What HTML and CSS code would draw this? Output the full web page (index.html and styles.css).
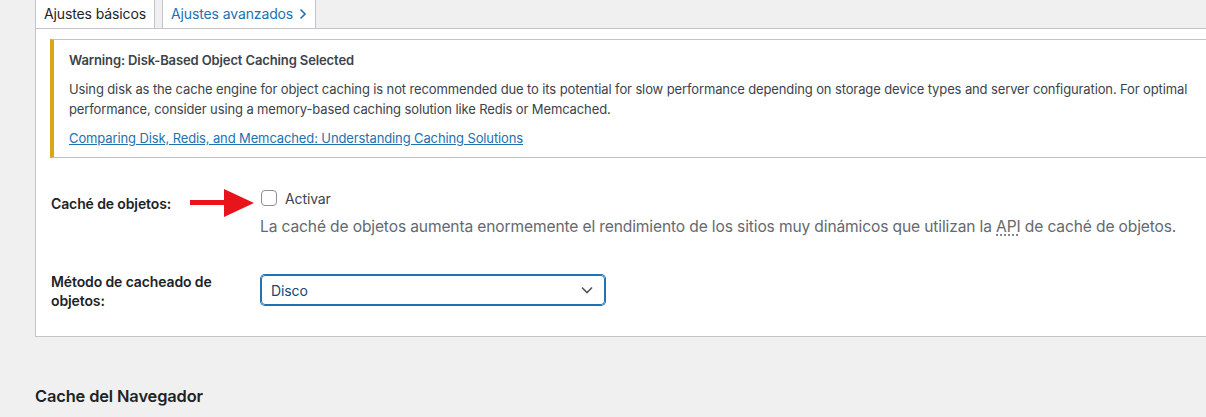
FILE: index.html
```html
<!DOCTYPE html>
<html lang="es">
<head>
<meta charset="utf-8">
<title>Ajustes</title>
<link rel="stylesheet" href="styles.css">
</head>
<body>
<div class="page">
  <nav class="tabs">
    <a class="tab tab-active">Ajustes básicos</a>
    <a class="tab tab-link">Ajustes avanzados <svg class="tab-chev" width="8" height="12" viewBox="0 0 8 12"><path d="M1.5 1.5 L6 6 L1.5 10.5" fill="none" stroke="currentColor" stroke-width="1.6"/></svg></a>
  </nav>
  <section class="panel">
    <div class="notice">
      <p class="notice-title">Warning: Disk-Based Object Caching Selected</p>
      <p class="notice-text">Using disk as the cache engine for object caching is not recommended due to its potential for slow performance depending on storage device types and server configuration. For optimal performance, consider using a memory-based caching solution like Redis or Memcached.</p>
      <p class="notice-link"><a href="#">Comparing Disk, Redis, and Memcached: Understanding Caching Solutions</a></p>
    </div>
    <div class="form">
      <div class="row row-first">
        <div class="label">Caché de objetos:</div>
        <div class="field">
          <label class="check"><span class="box"></span>Activar</label>
          <p class="desc">La caché de objetos aumenta enormemente el rendimiento de los sitios muy dinámicos que utilizan la <abbr>API</abbr> de caché de objetos.</p>
          <svg class="arrow" width="66" height="30" viewBox="0 0 66 30"><path d="M0 12 H34 V1 L64 15 L34 29 V17 H0 Z" fill="#e8141b"/></svg>
        </div>
      </div>
      <div class="row row-second">
        <div class="label">Método de cacheado de objetos:</div>
        <div class="field">
          <div class="select"><span>Disco</span><svg width="12" height="8" viewBox="0 0 12 8"><path d="M1 1.5 L6 6.5 L11 1.5" fill="none" stroke="#50575e" stroke-width="1.6"/></svg></div>
        </div>
      </div>
    </div>
  </section>
  <h2 class="heading">Cache del Navegador</h2>
</div>
</body>
</html>
```
FILE: styles.css
```css
html, body {
  margin: 0;
  padding: 0;
}
body {
  background: #f0f0f1;
  font-family: Inter, "Noto Sans", sans-serif;
  color: #1d2327;
  letter-spacing: -0.12px;
  overflow: hidden;
  width: 1206px;
  height: 417px;
}
.page {
  padding-left: 35px;
  width: 1200px;
}
.tabs {
  display: flex;
  gap: 7px;
  height: 28px;
}
.tab {
  display: flex;
  align-items: center;
  gap: 6px;
  background: #fff;
  border: 1px solid #c3c4c7;
  border-top: none;
  border-bottom: none;
  padding: 0 8px 2px 8px;
  font-size: 14px;
  text-decoration: none;
}
.tab-active {
  color: #1d2327;
}
.tab-link {
  color: #2271b1;
}
.tab-chev {
  margin-top: 1px;
}
.panel {
  background: #fff;
  border: 1px solid #c3c4c7;
  border-right: none;
  padding: 10px 0 26px 14px;
}
.notice {
  border: 1px solid #c3c4c7;
  border-left: 4px solid #dba617;
  border-right: none;
  padding: 10px 15px 9px 15px;
  font-size: 13px;
  color: #3c434a;
}
.notice p {
  margin: 0;
}
.notice-title {
  font-weight: 600;
  line-height: 20px;
  color: #3c434a;
}
.notice-text {
  margin-top: 10px !important;
  line-height: 19.5px;
}
.notice-link {
  margin-top: 9px !important;
  line-height: 20px;
}
.notice-link a {
  color: #2271b1;
}
.form {
  display: flex;
  flex-direction: column;
}
.row {
  display: grid;
  grid-template-columns: 210px 1fr;
}
.row-first {
  margin-top: 32px;
}
.row-second {
  margin-top: 33px;
}
.label {
  font-size: 14px;
  font-weight: 600;
  line-height: 19px;
  padding-left: 1px;
  width: 170px;
  color: #1d2327;
}
.row-first .label {
  padding-top: 4px;
}
.field {
  position: relative;
}
.check {
  display: flex;
  align-items: center;
  gap: 8px;
  height: 16px;
  font-size: 14px;
  color: #3c434a;
}
.box {
  width: 14px;
  height: 14px;
  border: 1px solid #8c8f94;
  border-radius: 4px;
  background: #fff;
  margin-left: 1px;
}
.desc {
  margin: 9px 0 0;
  font-size: 15.55px;
  line-height: 24px;
  color: #646970;
}
.desc abbr {
  text-decoration: underline dotted;
  text-underline-offset: 3px;
}
.arrow {
  position: absolute;
  left: -70px;
  top: -2px;
}
.select {
  margin-top: 3px;
  margin-left: 1px;
  height: 28px;
  border: 1px solid #2271b1;
  box-shadow: 0 0 0 1px #2271b1;
  border-radius: 4px;
  display: flex;
  align-items: center;
  justify-content: space-between;
  padding: 0 11px 0 9px;
  font-size: 14px;
  color: #0a4b78;
  box-sizing: content-box;
  width: 322px;
}
.heading {
  margin: 48px 0 0;
  font-size: 16.4px;
  font-weight: 600;
  color: #1d2327;
  line-height: 22px;
}
```
